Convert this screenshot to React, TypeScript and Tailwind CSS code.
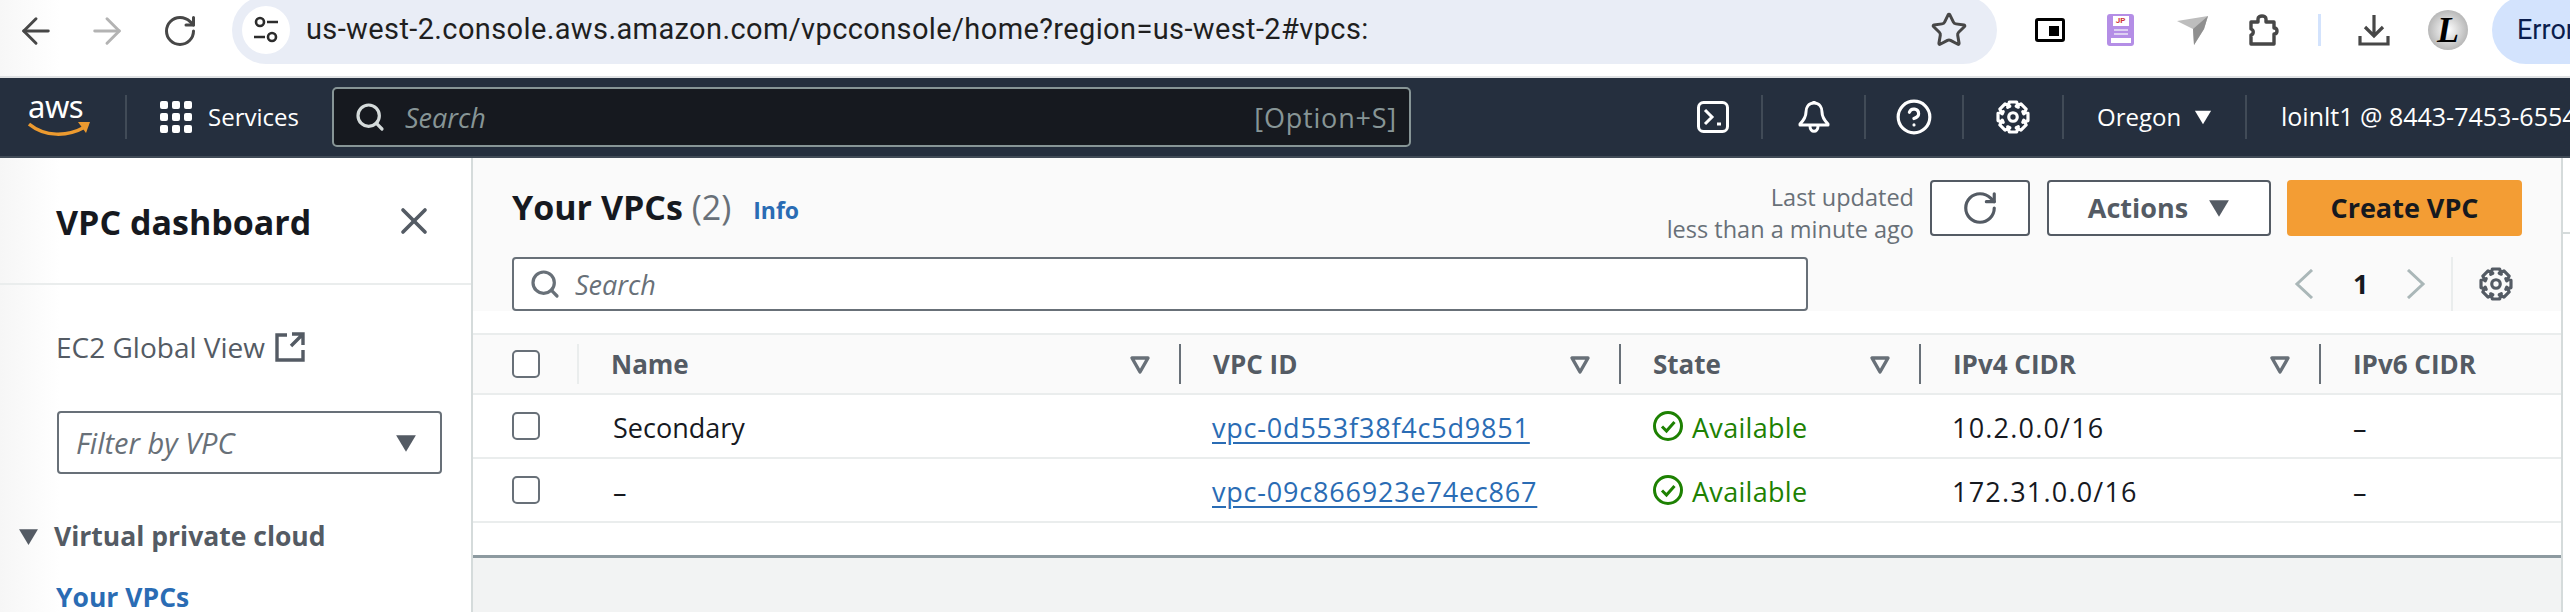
import { ArrowLeft, ArrowRight, RotateCw, Star, X, Search, CircleHelp } from "lucide-react";

const ember = "font-['Open_Sans',sans-serif]";

// aws style gear, outline is worked out from the tooth count
function gearPath() {
  const pts: string[] = [];
  for (let i = 0; i < 8; i++) {
    const a = (i * Math.PI) / 4;
    const steps = [
      [a - 0.5, 10.5],
      [a - 0.24, 14.5],
      [a + 0.24, 14.5],
      [a + 0.5, 10.5],
    ];
    for (const [t, r] of steps) {
      pts.push(`${(16 + r * Math.cos(t)).toFixed(1)} ${(16 + r * Math.sin(t)).toFixed(1)}`);
    }
  }
  return "M" + pts.join("L") + "z";
}

function Gear({ size, color }: { size: number; color: string }) {
  return (
    <svg width={size} height={size} viewBox="0 0 32 32" fill="none" stroke={color} strokeWidth="3" strokeLinejoin="round">
      <path d={gearPath()} />
      <circle cx="16" cy="16" r="4" />
    </svg>
  );
}

function NavSep() {
  return <div className="w-[2px] h-[44px] shrink-0 bg-[#414b57]" />;
}

function ColumnFilter() {
  return (
    <svg width="22" height="22" viewBox="0 0 22 22" className="shrink-0">
      <path d="M3 5h16l-8 14z" fill="none" stroke="#687078" strokeWidth="3.4" strokeLinejoin="round" />
    </svg>
  );
}

function Triangle({ size, color }: { size: number; color: string }) {
  return (
    <svg width={size} height={size} viewBox="0 0 20 20" className="shrink-0">
      <path d="M1 3h18l-9 15z" fill={color} />
    </svg>
  );
}

function Checkbox() {
  return <div className="w-[28px] h-[28px] rounded-[5px] border-2 border-[#687078] bg-white" />;
}

function HeaderCell({ label, sep = true, filter = true }: { label: string; sep?: boolean; filter?: boolean }) {
  return (
    <div className="flex items-center h-full">
      {sep && <div className="w-[2px] h-[40px] bg-[#687078]" />}
      <span className="ml-[32px] text-[26px] font-bold text-[#545b64]">{label}</span>
      {filter && (
        <div className="ml-auto mr-[28px]">
          <ColumnFilter />
        </div>
      )}
    </div>
  );
}

function Available() {
  return (
    <div className="flex items-center gap-[8px] ml-[33px] text-[27px] text-[#1d8102] tracking-[0.3px]">
      <svg width="32" height="32" viewBox="0 0 32 32">
        <circle cx="16" cy="16" r="13.5" fill="none" stroke="#1d8102" strokeWidth="3" />
        <path d="M10 16.5l4.5 4.5 8-9" fill="none" stroke="#1d8102" strokeWidth="3" />
      </svg>
      <span className="mt-[4px]">Available</span>
    </div>
  );
}

function VpcRow({ name, id, cidr }: { name: string; id: string; cidr: string }) {
  return (
    <div className="grid grid-cols-[106px_600px_440px_300px_400px_1fr] h-[64px] items-center bg-white border-b-2 border-[#eaeded] text-[27px] text-[#16191f]">
      <div className="pl-[39px]">
        <Checkbox />
      </div>
      <div className="pl-[34px] pt-[4px]">{name}</div>
      <div className="pl-[33px] pt-[4px]">
        <span className="text-[#2a6cb4] underline underline-offset-4 tracking-[0.8px]">{id}</span>
      </div>
      <Available />
      <div className="pl-[33px] pt-[4px] tracking-[1.2px]">{cidr}</div>
      <div className="pl-[34px] pt-[4px]">–</div>
    </div>
  );
}

function BrowserBar() {
  return (
    <div className="h-[78px] bg-[linear-gradient(to_right,#f7f7f7,#ffffff_60px)] border-b-2 border-[#dfe1e3] flex items-start overflow-hidden font-['Roboto',sans-serif]">
      <div className="w-[232px] h-[62px] flex items-center shrink-0">
        <ArrowLeft size={42} strokeWidth={1.7} color="#474747" className="ml-[15px]" />
        <ArrowRight size={42} strokeWidth={1.7} color="#b3b3b3" className="ml-[29px]" />
        <RotateCw size={36} strokeWidth={2} color="#474747" className="ml-[34px]" />
      </div>
      <div className="w-[1765px] h-[68px] -mt-[4px] rounded-full bg-[#e9edf6] flex items-center shrink-0">
        <div className="ml-[10px] w-[48px] h-[48px] rounded-full bg-white flex items-center justify-center">
          <svg width="26" height="30" viewBox="0 0 26 30" fill="none" stroke="#2c2c2c" strokeWidth="2.6">
            <circle cx="7" cy="7" r="4" />
            <path d="M14 7h11M1 22h11" />
            <circle cx="19" cy="22" r="4" />
          </svg>
        </div>
        <span className="ml-[16px] text-[29px] tracking-[0.38px] text-[#1f1f1f]">us-west-2.console.aws.amazon.com/vpcconsole/home?region=us-west-2#vpcs:</span>
        <Star size={38} strokeWidth={1.9} color="#474747" className="ml-auto mr-[29px]" />
      </div>
      <div className="flex items-center h-[60px] shrink-0">
        <div className="ml-[38px] w-[30px] h-[24px] border-[3px] border-black rounded-[3px] flex items-end justify-end p-[3px]">
          <div className="w-[10px] h-[10px] bg-black" />
        </div>
        <div className="ml-[42px] w-[27px] h-[32px] rounded-[3px] bg-[#b48ee6] flex flex-col items-center pt-[2px]">
          <div className="w-[16px] h-[10px] bg-white text-[8px] leading-[10px] font-bold text-[#d0353a] text-center">JP</div>
          <div className="w-[14px] h-[2px] mt-[3px] bg-[#ddd0f2]" />
          <div className="w-[14px] h-[2px] mt-[2px] bg-[#ddd0f2]" />
          <div className="w-[20px] h-[5px] mt-[3px] bg-white" />
        </div>
        <svg width="32" height="30" viewBox="0 0 32 30" className="ml-[43px]">
          <path d="M0 6L31 1 27 14 17 30 16 14z" fill="#bdbdbd" />
          <path d="M31 1L27 14 17 30 16 14z" fill="#8f8f8f" />
        </svg>
        <svg width="32" height="32" viewBox="0 0 32 32" fill="none" stroke="#474747" strokeWidth="3.4" className="ml-[39px]">
          <path d="M3 8h7V5c0-4 8-4 8 0v3h8v6c4 0 4 6 0 6v10H3V21c3-1 3-5 0-6z" strokeLinejoin="round" />
        </svg>
        <div className="ml-[38px] w-[3px] h-[32px] bg-[#d3e3fd]" />
        <svg width="32" height="32" viewBox="0 0 32 32" fill="none" stroke="#474747" strokeWidth="3.2" className="ml-[37px]">
          <path d="M16 1v21M7 13l9 9 9-9M2 22v8h28v-8" />
        </svg>
        <div className="ml-[38px] w-[40px] h-[40px] rounded-full bg-[radial-gradient(circle,#ffffff,#9a9a9a)] flex items-center justify-center font-['Liberation_Serif',serif] italic font-bold text-[36px] leading-[40px] text-black">
          L
        </div>
      </div>
      <div className="ml-[24px] h-[68px] -mt-[4px] flex-1 rounded-l-full bg-[#d3e3fd] pl-[25px] flex items-center text-[27px] text-[#0a1d4d] whitespace-nowrap">
        Error
      </div>
    </div>
  );
}

function TopNav() {
  return (
    <div className={`h-[80px] bg-[#252f3e] border-b-2 border-[#414b57] flex items-center text-white ${ember}`}>
      <div className="ml-[28px] w-[62px] h-[42px] relative shrink-0">
        <span className="absolute -top-[9px] left-0 text-[31px] leading-[38px] tracking-[-0.5px] font-['Noto_Sans',sans-serif]">aws</span>
        <svg width="64" height="18" viewBox="0 0 64 18" className="absolute left-0 bottom-0">
          <path d="M1 4c16 13 38 13 56 3" fill="none" stroke="#ec9a2f" strokeWidth="3.5" />
          <path d="M50 2h12l-4 11z" fill="#ec9a2f" />
        </svg>
      </div>
      <div className="ml-[35px] shrink-0">
        <NavSep />
      </div>
      <div className="ml-[33px] grid grid-cols-3 gap-[4px] w-[32px] shrink-0">
        {Array.from({ length: 9 }).map((_, i) => (
          <div key={i} className="w-[8px] h-[8px] rounded-[2px] bg-white" />
        ))}
      </div>
      <span className="ml-[16px] text-[24px] w-[90px] shrink-0">Services</span>
      <div className="ml-[34px] w-[1079px] h-[60px] rounded-[5px] border-2 border-[#879596] bg-[#16191f] flex items-center shrink-0">
        <Search size={32} strokeWidth={2.4} color="#d5dbdb" className="ml-[20px]" />
        <span className="ml-[19px] mt-[2px] text-[27px] italic text-[#879596]">Search</span>
        <span className="ml-auto mr-[12px] mt-[2px] text-[27px] tracking-[0.8px] text-[#879596]">[Option+S]</span>
      </div>
      <div className="ml-[254px] w-[96px] flex justify-center shrink-0">
        <svg width="32" height="32" viewBox="0 0 32 32" fill="none" stroke="white" strokeWidth="3">
          <rect x="1.5" y="1.5" width="29" height="29" rx="5" />
          <path d="M8 9l7 7-7 7M20 23h4" />
        </svg>
      </div>
      <NavSep />
      <div className="w-[101px] flex justify-center shrink-0">
        <svg width="32" height="34" viewBox="0 0 32 34" fill="none" stroke="white" strokeWidth="3" strokeLinejoin="round">
          <path d="M16 3c-6 0-8 5-8 9 0 5-2 8-6 12v1h28v-1c-4-4-6-7-6-12 0-4-2-9-8-9z" />
          <path d="M12 26c0 7 8 7 8 0M16 1v2" />
        </svg>
      </div>
      <NavSep />
      <div className="w-[96px] flex justify-center shrink-0">
        <CircleHelp size={38} strokeWidth={2} />
      </div>
      <NavSep />
      <div className="w-[98px] flex justify-center shrink-0">
        <Gear size={34} color="white" />
      </div>
      <NavSep />
      <div className="w-[181px] flex items-center pl-[33px] shrink-0 gap-[13px] text-[24px]">
        Oregon
        <Triangle size={18} color="white" />
      </div>
      <NavSep />
      <span className="ml-[34px] text-[25px] whitespace-nowrap shrink-0">loinlt1 @ 8443-7453-6554</span>
    </div>
  );
}

function Sidebar() {
  return (
    <div className="w-[473px] shrink-0 bg-[linear-gradient(to_right,#f6f6f6,#ffffff_60px)] border-r-2 border-[#d5dbdb] overflow-hidden">
      <div className="h-[127px] border-b-2 border-[#eaeded] flex items-center pl-[56px]">
        <span className="pt-[3px] text-[34px] font-bold text-[#16191f]">VPC dashboard</span>
        <X size={44} strokeWidth={2} color="#545b64" className="ml-auto mr-[35px]" />
      </div>
      <div className="mt-[44px] ml-[56px] flex items-center gap-[10px] text-[28px] leading-[36px] text-[#545b64]">
        EC2 Global View
        <svg width="30" height="30" viewBox="0 0 30 30" fill="none" stroke="#545b64" strokeWidth="3.4">
          <path d="M12 3H2v25h26V18M16 14L27 3M17 2h11v11" />
        </svg>
      </div>
      <div className="mt-[46px] ml-[57px] w-[385px] h-[63px] rounded-[4px] border-2 border-[#687078] flex items-center pl-[17px] pr-[23px] text-[29px] italic text-[#687078]">
        Filter by VPC
        <div className="ml-auto">
          <Triangle size={22} color="#545b64" />
        </div>
      </div>
      <div className="mt-[42px] ml-[18px] flex items-center gap-[15px] text-[26.5px] leading-[40px] font-bold text-[#545b64]">
        <Triangle size={21} color="#545b64" />
        Virtual private cloud
      </div>
      <div className="mt-[21px] ml-[56px] text-[26.5px] leading-[40px] font-bold text-[#2a6cb4]">Your VPCs</div>
    </div>
  );
}

function VpcPanel() {
  return (
    <div className="bg-white border-b-[3px] border-[#8d9aa0]">
      <div className="bg-[#fafafa] pl-[39px] pr-[39px] pt-[22px]">
        <div className="flex items-center h-[56px]">
          <h1 className="-mt-[2px] text-[34px] font-bold text-[#16191f]">
            Your VPCs <span className="font-normal text-[#687078]">(2)</span>
          </h1>
          <span className="ml-[22px] mt-[4px] text-[23px] font-bold text-[#2a6cb4]">Info</span>
          <div className="ml-auto mt-[10px] text-right text-[23.5px] leading-[32px] text-[#687078]">
            <div>Last updated</div>
            <div>less than a minute ago</div>
          </div>
          <button className="ml-[16px] w-[100px] h-[56px] rounded-[4px] border-2 border-[#545b64] bg-white flex items-center justify-center">
            <RotateCw size={38} strokeWidth={2} color="#545b64" />
          </button>
          <button className="ml-[17px] w-[224px] h-[56px] rounded-[4px] border-2 border-[#545b64] bg-white flex items-center justify-center gap-[20px] text-[27px] font-bold text-[#545b64]">
            Actions
            <Triangle size={22} color="#545b64" />
          </button>
          <button className="ml-[16px] w-[235px] h-[56px] rounded-[4px] bg-[#f39d34] text-[27px] font-bold text-[#16191f]">Create VPC</button>
        </div>
        <div className="mt-[21px] mb-[22px] flex items-center h-[54px]">
          <div className="w-[1296px] h-[54px] rounded-[4px] border-2 border-[#687078] bg-white flex items-center">
            <Search size={32} strokeWidth={2.4} color="#687078" className="ml-[15px]" />
            <span className="ml-[14px] mt-[2px] text-[27px] italic text-[#687078]">Search</span>
          </div>
          <div className="ml-auto flex items-center h-full">
            <svg width="20" height="30" viewBox="0 0 20 30" fill="none" stroke="#aab7b8" strokeWidth="3">
              <path d="M18 1L3 15l15 14" />
            </svg>
            <span className="ml-[39px] w-[12px] text-[27px] font-bold text-[#16191f]">1</span>
            <svg width="20" height="30" viewBox="0 0 20 30" fill="none" stroke="#aab7b8" strokeWidth="3" className="ml-[41px]">
              <path d="M2 1l15 14L2 29" />
            </svg>
            <div className="ml-[25px] w-[2px] h-[54px] bg-[#eaeded]" />
            <div className="ml-[26px] mr-[9px]">
              <Gear size={34} color="#545b64" />
            </div>
          </div>
        </div>
      </div>
      <div className="grid grid-cols-[106px_600px_440px_300px_400px_1fr] h-[62px] items-center bg-[#fafafa] border-y-2 border-[#eaeded]">
        <div className="pl-[39px] flex items-center h-full">
          <Checkbox />
          <div className="ml-auto w-[2px] h-[40px] bg-[#eaeded]" />
        </div>
        <HeaderCell label="Name" sep={false} />
        <HeaderCell label="VPC ID" />
        <HeaderCell label="State" />
        <HeaderCell label="IPv4 CIDR" />
        <HeaderCell label="IPv6 CIDR" filter={false} />
      </div>
      <VpcRow name="Secondary" id="vpc-0d553f38f4c5d9851" cidr="10.2.0.0/16" />
      <VpcRow name="–" id="vpc-09c866923e74ec867" cidr="172.31.0.0/16" />
      <div className="h-[32px]" />
    </div>
  );
}

export default function App() {
  return (
    <div className={`w-[2570px] h-[612px] overflow-hidden bg-white ${ember}`}>
      <BrowserBar />
      <TopNav />
      <div className="flex h-[454px]">
        <Sidebar />
        <div className="flex-1 min-w-0 bg-[#f2f3f3]">
          <VpcPanel />
        </div>
        <div className="w-[9px] shrink-0 bg-white border-l-2 border-[#d5dbdb] pt-[74px]">
          <div className="h-[2px] bg-[#d5dbdb]" />
        </div>
      </div>
    </div>
  );
}
